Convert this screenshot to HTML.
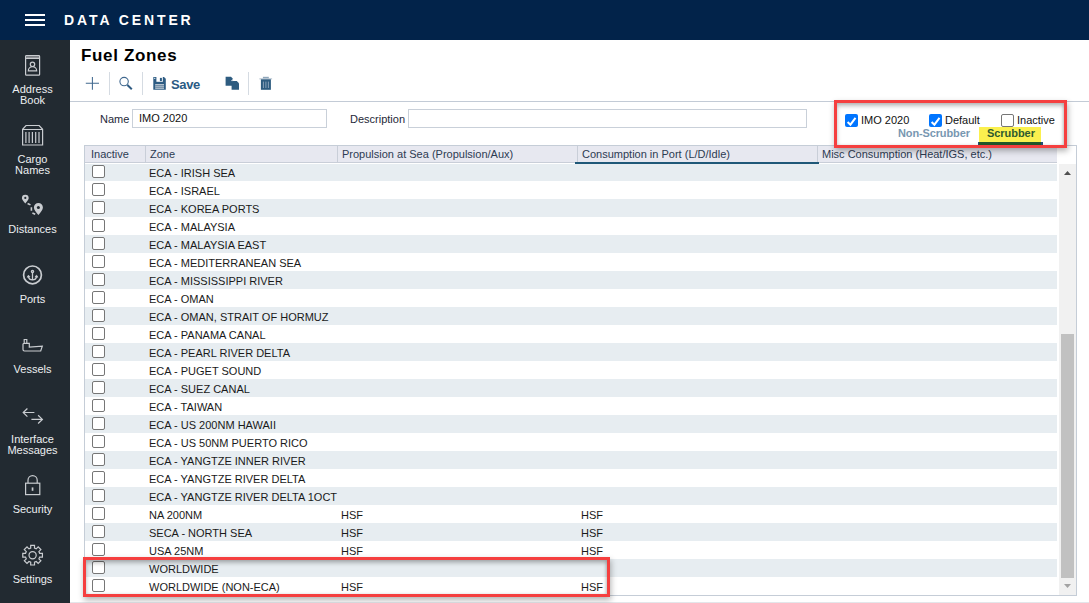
<!DOCTYPE html>
<html><head><meta charset="utf-8">
<style>
*{margin:0;padding:0;box-sizing:border-box}
html,body{width:1089px;height:603px;overflow:hidden;background:#fff;font-family:"Liberation Sans",sans-serif;position:relative}
.abs{position:absolute}
#hdr{left:0;top:0;width:1089px;height:40px;background:#02234a}
#hdr .bar{position:absolute;left:25px;width:20px;height:2px;background:#fff}
#hdr .ttl{position:absolute;left:64px;top:12px;color:#fff;font-weight:bold;font-size:14px;letter-spacing:2.9px;line-height:16px;white-space:nowrap}
#side{left:0;top:40px;width:70px;height:563px;background:#222a31}
.lbl{position:absolute;left:0;width:65px;text-align:center;color:#eceef0;font-size:11px;line-height:11px;white-space:nowrap}
#title{left:81px;top:46px;font-size:17px;font-weight:bold;color:#000;line-height:20px;letter-spacing:0.65px;white-space:nowrap}
.sep{position:absolute;top:72px;width:1px;height:23px;background:#d5dbe2}
#hline{left:70px;top:101px;width:1019px;height:1px;background:#c3cbd6}
#save{left:171px;top:77px;font-size:13px;font-weight:bold;color:#2b5b84;line-height:16px;letter-spacing:-0.35px}
.lab{position:absolute;font-size:11px;color:#1e2838;line-height:13px;white-space:nowrap}
.inp{position:absolute;border:1px solid #c9d0d9;background:#fff;height:19px}
#grid{left:84px;top:145px;width:993px;height:451px;border:1px solid #c5cdd7;background:#fff;overflow:hidden}
#ghead{position:absolute;left:0;top:0;width:972px;height:17px;background:#e7e8f0;border-bottom:1px solid #c9ced8}
.hc{position:absolute;top:0;height:16px;font-size:11px;color:#2d3b52;line-height:16px;white-space:nowrap}
.hsep{position:absolute;top:0;width:1px;height:16px;background:#c9ced8}
.row{position:absolute;left:0;width:972px;height:18px}
.row.alt{background:#e7edf1}
.cb{position:absolute;left:7px;top:2px;width:13px;height:13px;border:1px solid #767676;border-radius:2px;background:#fff}
.cell{position:absolute;top:1px;font-size:11px;line-height:18px;color:#1a1a1a;white-space:nowrap}
#sb{position:absolute;left:974px;top:18px;width:17px;height:431px;background:#f1f1f1}
#thumb{position:absolute;left:2px;top:170px;width:13px;height:244px;background:#c1c1c1}
.red{position:absolute;border:3px solid #f53f3f;box-shadow:1px 3px 6px rgba(0,0,0,.3), inset 0 3px 4px rgba(0,0,0,.26), inset -1px 0 3px rgba(0,0,0,.12)}
.ck{position:absolute;width:13px;height:13px;border-radius:2px}
.ck.on{background:#0075ff}
.ck.off{border:1px solid #767676;background:#fff}
#foot{left:70px;top:602px;width:1019px;height:1px;background:#e3e6ea}
</style></head>
<body>
<div id="hdr" class="abs">
  <div class="bar" style="top:14px"></div>
  <div class="bar" style="top:19px"></div>
  <div class="bar" style="top:24px"></div>
  <div class="ttl">DATA CENTER</div>
</div>
<div id="side" class="abs"></div>
<svg class="abs" style="left:0;top:0" width="70" height="603" viewBox="0 0 70 603" fill="none" stroke="#c9ccd0" stroke-width="1.2">
  <!-- address book -->
  <rect x="25.6" y="55.6" width="14" height="19.6" rx="0.8"/>
  <rect x="26.2" y="56.3" width="12.8" height="1.6" fill="#8d9196" stroke="none"/>
  <line x1="26" y1="58.4" x2="39.2" y2="58.4"/>
  <circle cx="32.5" cy="64.3" r="2.2"/>
  <path d="M28.3 70.9 A4.2 4.2 0 0 1 36.7 70.9 Z"/>
  <!-- cargo -->
  <path d="M26 125.5 H39.2 L42.6 129.3 V145 H22.6 V129.3 Z M22.6 129.5 H42.6"/>
  <path d="M25.9 132V143M29.1 132V143M32.4 132V143M35.7 132V143M39 132V143"/>
  <!-- distances -->
  <path d="M25.3 203.6 C23.6 201.3 21.9 199.6 21.9 198.2 A3.4 3.4 0 0 1 28.7 198.2 C28.7 199.6 27 201.3 25.3 203.6Z" fill="#c9ccd0" stroke="none"/>
  <circle cx="25.3" cy="197.9" r="1.1" fill="#222a31" stroke="none"/>
  <path d="M38.4 214.9 C36 212 33.9 209.8 33.9 207.4 A4.5 4.5 0 0 1 42.9 207.4 C42.9 209.8 40.8 212 38.4 214.9Z" fill="#c9ccd0" stroke="none"/>
  <circle cx="38.4" cy="207.4" r="1.5" fill="#222a31" stroke="none"/>
  <path d="M27.6 203.5 L30.5 204.9 M31.4 207.2 V210.8 M32.4 213.1 L35.2 214.3" stroke-width="1.6"/>
  <!-- ports -->
  <circle cx="32.5" cy="274.9" r="8.9" stroke-width="1.7"/>
  <circle cx="32.5" cy="271.4" r="1.1" stroke-width="1.3"/>
  <path d="M32.5 272.6 V279.8 M28.5 276.6 Q29 279.9 32.5 279.9 Q36 279.9 36.5 276.6" stroke-width="1.3"/>
  <path d="M27.2 277.2 L28.4 275.2 L30 276.8 Z M34.9 276.8 L36.6 275.2 L37.8 277.2 Z" fill="#c9ccd0" stroke-width="0.8"/>
  <!-- vessels -->
  <path d="M24.2 343.3 V339.5 H26.8 V343.3 M23 344.3 Q23 343.4 24 343.4 H29.3 V347.1 L42.3 346.1 L40.7 351 H24.4 Q23 351 23 349.6 Z"/>
  <!-- interface -->
  <path d="M23 412.5 H34.4 M27.4 408.5 L23.2 412.5 L27.4 416.6"/>
  <path d="M31.4 419.4 H42.6 M38.1 415.3 L42.4 419.4 L38.1 423.5"/>
  <!-- security -->
  <rect x="25.6" y="483.2" width="14.2" height="11.4"/>
  <path d="M28 483 V480.2 A4.6 4.6 0 0 1 37.2 480.2 V483"/>
  <rect x="31.7" y="487.4" width="1.7" height="3.4" fill="#c9ccd0" stroke="none"/>
  <!-- settings -->
  <path id="gear" d="M30.71 548.15 L30.69 545.38 L34.51 545.38 L34.49 548.15 L36.25 548.88 L38.19 546.91 L40.89 549.61 L38.92 551.55 L39.65 553.31 L42.42 553.29 L42.42 557.11 L39.65 557.09 L38.92 558.85 L40.89 560.79 L38.19 563.49 L36.25 561.52 L34.49 562.25 L34.51 565.02 L30.69 565.02 L30.71 562.25 L28.95 561.52 L27.01 563.49 L24.31 560.79 L26.28 558.85 L25.55 557.09 L22.78 557.11 L22.78 553.29 L25.55 553.31 L26.28 551.55 L24.31 549.61 L27.01 546.91 L28.95 548.88 Z"/>
  <circle cx="32.6" cy="555.2" r="3.6"/>
</svg>
<div class="lbl" style="top:84px">Address</div>
<div class="lbl" style="top:95px">Book</div>
<div class="lbl" style="top:154px">Cargo</div>
<div class="lbl" style="top:165px">Names</div>
<div class="lbl" style="top:224px">Distances</div>
<div class="lbl" style="top:294px">Ports</div>
<div class="lbl" style="top:364px">Vessels</div>
<div class="lbl" style="top:434px">Interface</div>
<div class="lbl" style="top:445px">Messages</div>
<div class="lbl" style="top:504px">Security</div>
<div class="lbl" style="top:574px">Settings</div>

<div id="title" class="abs">Fuel Zones</div>
<!-- toolbar -->
<svg class="abs" style="left:70px;top:60px" width="220" height="40" viewBox="70 60 220 40">
  <path d="M85.8 83.3 H99 M92.4 76.9 V89.8" stroke="#41698f" stroke-width="1.05" fill="none"/>
  <circle cx="124.1" cy="81.6" r="4.2" stroke="#41698f" stroke-width="1.1" fill="none"/>
  <path d="M127.4 85 L131.8 89.2" stroke="#2f5b82" stroke-width="2" fill="none"/>
  <!-- floppy -->
  <path d="M153.3 77 H164 L165.8 78.8 V89.7 H153.3 Z" fill="#2e5c83"/>
  <rect x="156.4" y="77" width="6.4" height="4.8" fill="#fff"/>
  <rect x="159.9" y="77.9" width="2" height="3.2" fill="#2e5c83"/>
  <rect x="155.2" y="84" width="8.8" height="4.9" fill="#b4c3d0"/>
  <path d="M155.2 85.6 H164 M155.2 87.3 H164" stroke="#5a7b97" stroke-width="0.8"/>
  <rect x="154.1" y="77.8" width="1.2" height="1.2" fill="#cfe0ee"/>
  <!-- copy -->
  <path d="M225.6 76.8 H231 L232.4 78.2 V85.8 H225.6 Z" fill="#2e5c80"/>
  <path d="M231.6 81 H236.8 L239 83.2 V89.8 H231.6 Z" fill="#2e5c80"/>
  <path d="M231.2 80.6 H233.2" stroke="#d8dfe6" stroke-width="0.9"/>
  <!-- trash -->
  <rect x="262.9" y="76.8" width="5.9" height="1.8" fill="#8fa6ba"/>
  <rect x="259.4" y="78.3" width="12.7" height="1.1" fill="#b3c1cd"/>
  <rect x="260.9" y="79.3" width="10" height="10.5" fill="#2e5c80"/>
  <path d="M263.4 81.6 V88 M265.9 81.6 V88 M268.4 81.6 V88" stroke="#9fb4c6" stroke-width="0.8"/>
</svg>
<div class="sep" style="left:109px"></div>
<div class="sep" style="left:142px"></div>
<div class="sep" style="left:248px"></div>
<div id="save" class="abs">Save</div>
<div id="hline" class="abs"></div>

<div class="lab" style="left:100px;top:113px">Name</div>
<div class="inp" style="left:132px;top:109px;width:195px"></div>
<div class="lab" style="left:139px;top:112px;color:#111">IMO 2020</div>
<div class="lab" style="left:350px;top:113px">Description</div>
<div class="inp" style="left:408px;top:109px;width:399px"></div>

<div id="grid" class="abs">
  <div id="ghead">
    <div class="hc" style="left:6px">Inactive</div>
    <div class="hsep" style="left:60px"></div>
    <div class="hc" style="left:65px">Zone</div>
    <div class="hsep" style="left:252px"></div>
    <div class="hc" style="left:257px">Propulsion at Sea (Propulsion/Aux)</div>
    <div class="hsep" style="left:492px"></div>
    <div class="hc" style="left:497px">Consumption in Port (L/D/Idle)</div>
    <div class="hsep" style="left:732px"></div>
    <div class="hc" style="left:737px">Misc Consumption (Heat/IGS, etc.)</div>
  </div>
<div class="row alt" style="top:17px"><div class="cb"></div><div class="cell" style="left:64px">ECA - IRISH SEA</div></div>
<div class="row" style="top:35px"><div class="cb"></div><div class="cell" style="left:64px">ECA - ISRAEL</div></div>
<div class="row alt" style="top:53px"><div class="cb"></div><div class="cell" style="left:64px">ECA - KOREA PORTS</div></div>
<div class="row" style="top:71px"><div class="cb"></div><div class="cell" style="left:64px">ECA - MALAYSIA</div></div>
<div class="row alt" style="top:89px"><div class="cb"></div><div class="cell" style="left:64px">ECA - MALAYSIA EAST</div></div>
<div class="row" style="top:107px"><div class="cb"></div><div class="cell" style="left:64px">ECA - MEDITERRANEAN SEA</div></div>
<div class="row alt" style="top:125px"><div class="cb"></div><div class="cell" style="left:64px">ECA - MISSISSIPPI RIVER</div></div>
<div class="row" style="top:143px"><div class="cb"></div><div class="cell" style="left:64px">ECA - OMAN</div></div>
<div class="row alt" style="top:161px"><div class="cb"></div><div class="cell" style="left:64px">ECA - OMAN, STRAIT OF HORMUZ</div></div>
<div class="row" style="top:179px"><div class="cb"></div><div class="cell" style="left:64px">ECA - PANAMA CANAL</div></div>
<div class="row alt" style="top:197px"><div class="cb"></div><div class="cell" style="left:64px">ECA - PEARL RIVER DELTA</div></div>
<div class="row" style="top:215px"><div class="cb"></div><div class="cell" style="left:64px">ECA - PUGET SOUND</div></div>
<div class="row alt" style="top:233px"><div class="cb"></div><div class="cell" style="left:64px">ECA - SUEZ CANAL</div></div>
<div class="row" style="top:251px"><div class="cb"></div><div class="cell" style="left:64px">ECA - TAIWAN</div></div>
<div class="row alt" style="top:269px"><div class="cb"></div><div class="cell" style="left:64px">ECA - US 200NM HAWAII</div></div>
<div class="row" style="top:287px"><div class="cb"></div><div class="cell" style="left:64px">ECA - US 50NM PUERTO RICO</div></div>
<div class="row alt" style="top:305px"><div class="cb"></div><div class="cell" style="left:64px">ECA - YANGTZE INNER RIVER</div></div>
<div class="row" style="top:323px"><div class="cb"></div><div class="cell" style="left:64px">ECA - YANGTZE RIVER DELTA</div></div>
<div class="row alt" style="top:341px"><div class="cb"></div><div class="cell" style="left:64px">ECA - YANGTZE RIVER DELTA 1OCT</div></div>
<div class="row" style="top:359px"><div class="cb"></div><div class="cell" style="left:64px">NA 200NM</div><div class="cell" style="left:256px">HSF</div><div class="cell" style="left:496px">HSF</div></div>
<div class="row alt" style="top:377px"><div class="cb"></div><div class="cell" style="left:64px">SECA - NORTH SEA</div><div class="cell" style="left:256px">HSF</div><div class="cell" style="left:496px">HSF</div></div>
<div class="row" style="top:395px"><div class="cb"></div><div class="cell" style="left:64px">USA 25NM</div><div class="cell" style="left:256px">HSF</div><div class="cell" style="left:496px">HSF</div></div>
<div class="row alt" style="top:413px"><div class="cb"></div><div class="cell" style="left:64px">WORLDWIDE</div></div>
<div class="row" style="top:431px"><div class="cb"></div><div class="cell" style="left:64px">WORLDWIDE (NON-ECA)</div><div class="cell" style="left:256px">HSF</div><div class="cell" style="left:496px">HSF</div></div>
  <div class="abs" style="left:0;top:17px;width:972px;height:1px;background:#fff"></div>
  <div class="abs" style="left:490px;top:16px;width:244px;height:2px;background:#1f5878"></div>
  <div id="sb">
    <svg class="abs" style="left:0;top:0" width="17" height="431">
      <path d="M5 11 L8.5 7 L12 11 Z" fill="#505050"/>
      <path d="M5 420 L8.5 424 L12 420 Z" fill="#a3a3a3"/>
    </svg>
    <div id="thumb"></div>
  </div>
</div>
<div id="foot" class="abs"></div>

<!-- red box top right -->
<div class="abs" style="left:834px;top:100px;width:233px;height:48px;background:#fff"></div>
<div class="ck on" style="left:845px;top:114px"><svg width="13" height="13"><path d="M2.6 7 L5.4 9.7 L10.5 2.9" stroke="#fff" stroke-width="2" fill="none"/></svg></div>
<div class="lab" style="left:861px;top:114px;color:#111">IMO 2020</div>
<div class="ck on" style="left:929px;top:114px"><svg width="13" height="13"><path d="M2.6 7 L5.4 9.7 L10.5 2.9" stroke="#fff" stroke-width="2" fill="none"/></svg></div>
<div class="lab" style="left:945px;top:114px;color:#111">Default</div>
<div class="ck off" style="left:1001px;top:114px"></div>
<div class="lab" style="left:1017px;top:114px;color:#111">Inactive</div>
<div class="abs" style="left:979px;top:127px;width:62px;height:18px;background:#fbf04e"></div>
<div class="abs" style="left:978px;top:142px;width:65px;height:3px;background:#23507a"></div><div class="abs" style="left:979px;top:142px;width:62px;height:3px;background:#25582a"></div>
<div class="lab" style="left:898px;top:127px;font-weight:bold;color:#7897b1;letter-spacing:-0.13px">Non-Scrubber</div>
<div class="lab" style="left:987px;top:127px;font-weight:bold;color:#2e5a2f;letter-spacing:-0.05px">Scrubber</div>
<div class="red" style="left:834px;top:100px;width:233px;height:48px"></div>
<!-- red box bottom -->
<div class="red" style="left:83px;top:557px;width:527px;height:40px"></div>
</body></html>
